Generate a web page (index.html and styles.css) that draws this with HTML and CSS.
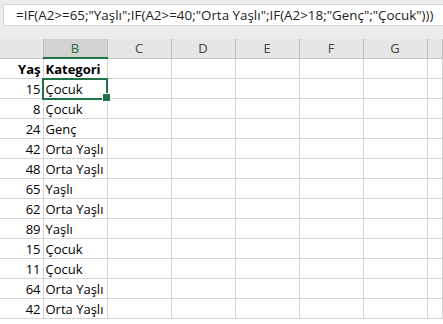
FILE: index.html
```html
<!DOCTYPE html>
<html lang="tr">

<head>
  <meta charset="UTF-8">
  <title>Kategori</title>
  <link rel="stylesheet" href="styles.css">
</head>

<body>
  <div class="formula-area">
    <div class="formula-bar">=IF(A2&gt;=65;"Yaşlı";IF(A2&gt;=40;"Orta Yaşlı";IF(A2&gt;18;"Genç";"Çocuk")))</div>
  </div>

  <table class="sheet">
    <colgroup>
      <col class="col-a">
      <col class="col-std">
      <col class="col-std">
      <col class="col-std">
      <col class="col-std">
      <col class="col-std">
      <col class="col-std">
      <col>
    </colgroup>
    <thead>
      <tr class="col-heads">
        <th></th>
        <th class="selected">B</th>
        <th>C</th>
        <th>D</th>
        <th>E</th>
        <th>F</th>
        <th>G</th>
        <th></th>
      </tr>
    </thead>
    <tbody id="rows">
      <tr class="bold">
        <td class="num">Yaş</td>
        <td>Kategori</td>
        <td></td><td></td><td></td><td></td><td></td><td></td>
      </tr>
    </tbody>
  </table>

  <script>
    const people = [15, 8, 24, 42, 48, 65, 62, 89, 15, 11, 64, 42];

    function category(age) {
      if (age >= 65) return "Yaşlı";
      if (age >= 40) return "Orta Yaşlı";
      if (age > 18) return "Genç";
      return "Çocuk";
    }

    const body = document.getElementById("rows");
    people.forEach((age, i) => {
      const row = document.createElement("tr");
      row.innerHTML = `<td class="num">${age}</td><td${i === 0 ? ' class="active"' : ''}>${category(age)}</td>` +
        "<td></td><td></td><td></td><td></td><td></td><td></td>";
      body.appendChild(row);
    });
  </script>
</body>

</html>
```

FILE: styles.css
```css
* {
  box-sizing: border-box;
  margin: 0;
  padding: 0;
}

body {
  width: 443px;
  height: 324px;
  overflow: hidden;
  background-color: white;
  font-family: "Open Sans", sans-serif;
}

.formula-area {
  height: 39px;
  background-color: #ececec;
  padding: 4px 0 0 3px;
}

.formula-bar {
  height: 22px;
  background-color: white;
  border: 1px solid #d6d6d6;
  border-right: none;
  padding-left: 12px;
  font-size: 13.4px;
  line-height: 20px;
  color: #222;
  white-space: nowrap;
  overflow: hidden;
}

.sheet {
  table-layout: fixed;
  border-collapse: collapse;
  width: 443px;
  font-size: 13px;
}

.col-a {
  width: 43px;
}

.col-std {
  width: 64px;
}

.col-heads th {
  height: 19px;
  background-color: #e6e6e6;
  border-right: 1px solid #bfbfbf;
  border-bottom: 1px solid #c6c6c6;
  font-weight: normal;
  font-size: 13px;
  color: #444;
  padding: 0;
}

.col-heads th.selected {
  background-color: #d2d2d2;
  color: #217346;
  border-bottom: 2px solid #217346;
}

.sheet td {
  height: 20px;
  border-right: 1px solid #d4d4d4;
  border-bottom: 1px solid #d4d4d4;
  padding: 2px 2px 0;
  line-height: 17px;
  white-space: nowrap;
  overflow: hidden;
  color: #000;
}

.sheet td.num {
  text-align: right;
}

.bold td {
  font-weight: bold;
}

.sheet td.active {
  position: relative;
  overflow: visible;
  outline: 2px solid #217346;
  outline-offset: -1px;
}

.sheet td.active::after {
  content: "";
  position: absolute;
  right: -4px;
  bottom: -4px;
  width: 7px;
  height: 7px;
  background-color: #217346;
  border: 1px solid white;
}
```
